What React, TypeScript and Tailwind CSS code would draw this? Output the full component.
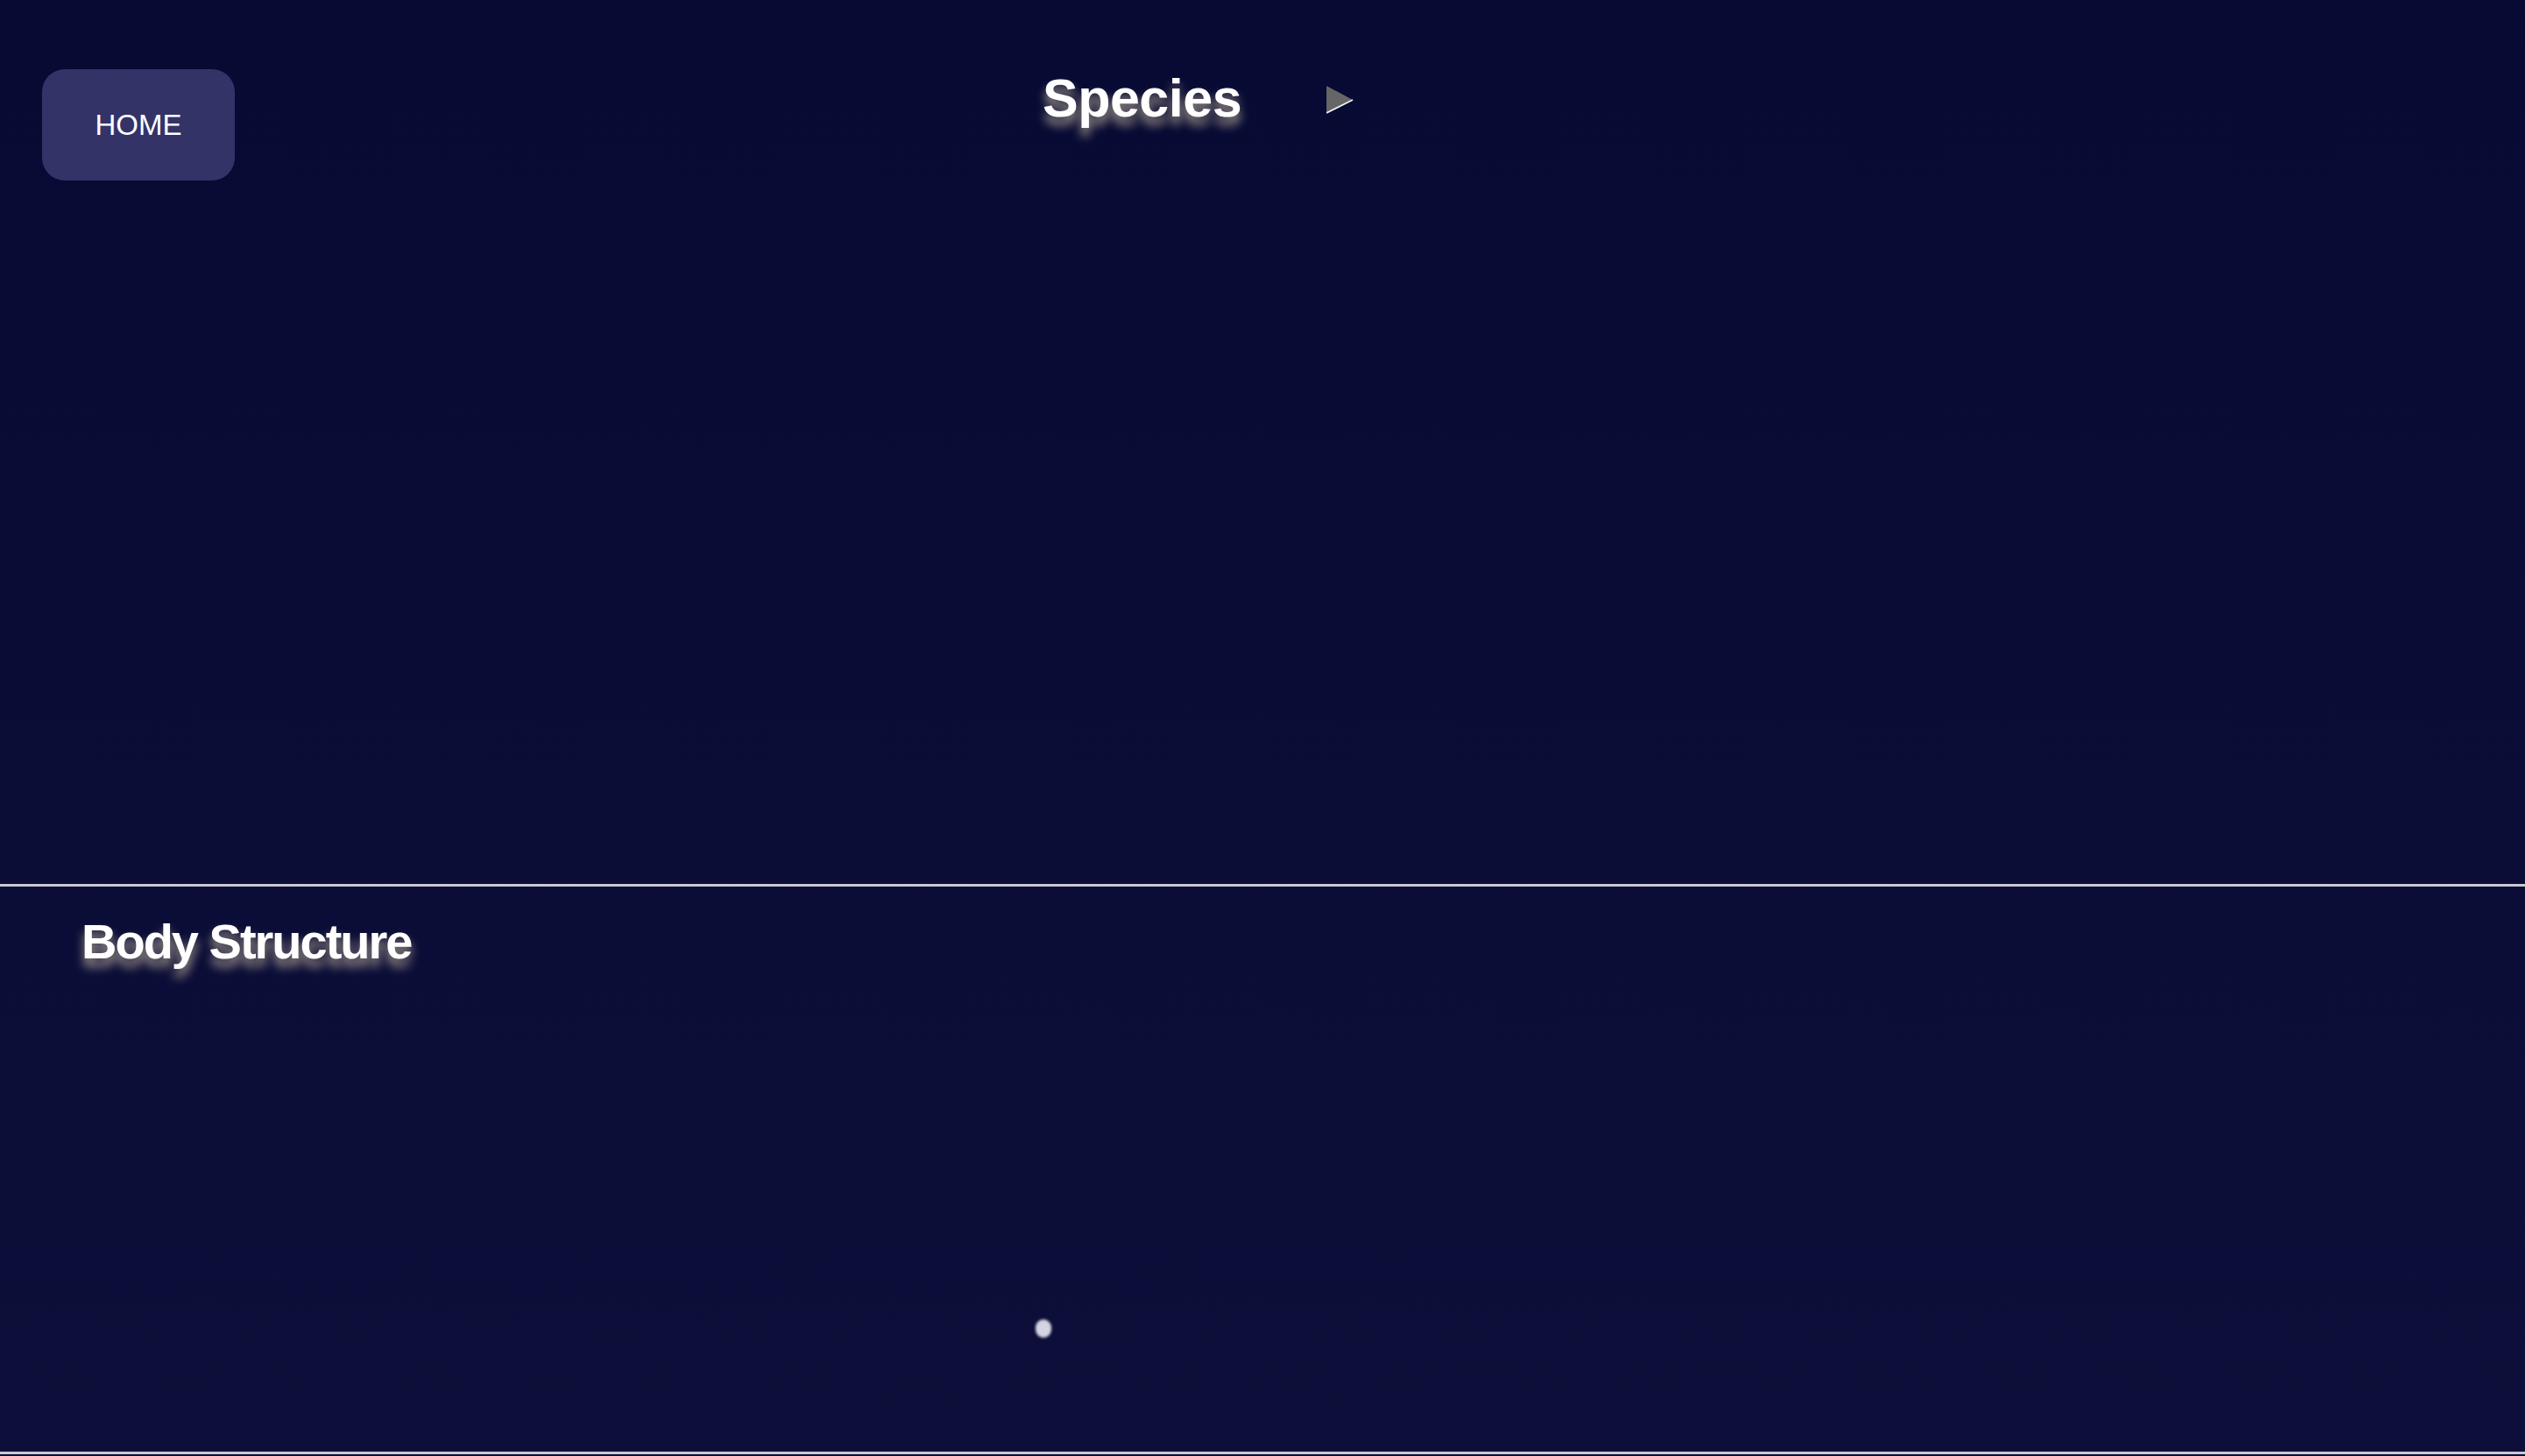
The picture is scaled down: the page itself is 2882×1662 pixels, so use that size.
import React from "react";

const glow = "[text-shadow:0_9px_12px_rgba(236,218,180,0.7)]";

function PlayArrow() {
  return (
    <svg width="31" height="32" viewBox="0 0 31 32" className="block">
      <polygon points="0,0 30,16 0,31.5" fill="#666666" />
      <line x1="0" y1="31" x2="30" y2="16" stroke="#f2f2f2" strokeWidth="1.6" />
    </svg>
  );
}

export default function App() {
  return (
    <div className="min-h-screen w-full bg-gradient-to-b from-[#070a33] to-[#0d0f3a] font-['Liberation_Sans',Arial,sans-serif] text-white overflow-hidden">
      {/* species header */}
      <section className="h-[1009px] border-b-[3px] border-[#c9c9cf] box-content">
        <div className="flex items-start">
          <button className="ml-[48px] mt-[79px] w-[220px] h-[127px] rounded-[26px] bg-[#343368] text-[33px] leading-none text-white flex items-center justify-center">
            HOME
          </button>
          <h1 className={`ml-[922px] mt-[82px] text-[61px] font-bold leading-none tracking-[-0.5px] ${glow}`}>
            Species
          </h1>
          <div className="ml-[97px] mt-[98px]">
            <PlayArrow />
          </div>
        </div>
      </section>

      {/* body structure */}
      <section className="relative h-[645px] border-b-[3px] border-[#c9c9cf] box-content">
        <h2 className={`pl-[93px] pt-[35px] text-[56px] font-bold leading-none tracking-[-2px] ${glow}`}>
          Body Structure
        </h2>
        <div className="absolute left-[1182px] top-[494px] w-[18px] h-[21px] rounded-full bg-[#d4d4e2] blur-[1.5px]" />
      </section>
    </div>
  );
}
